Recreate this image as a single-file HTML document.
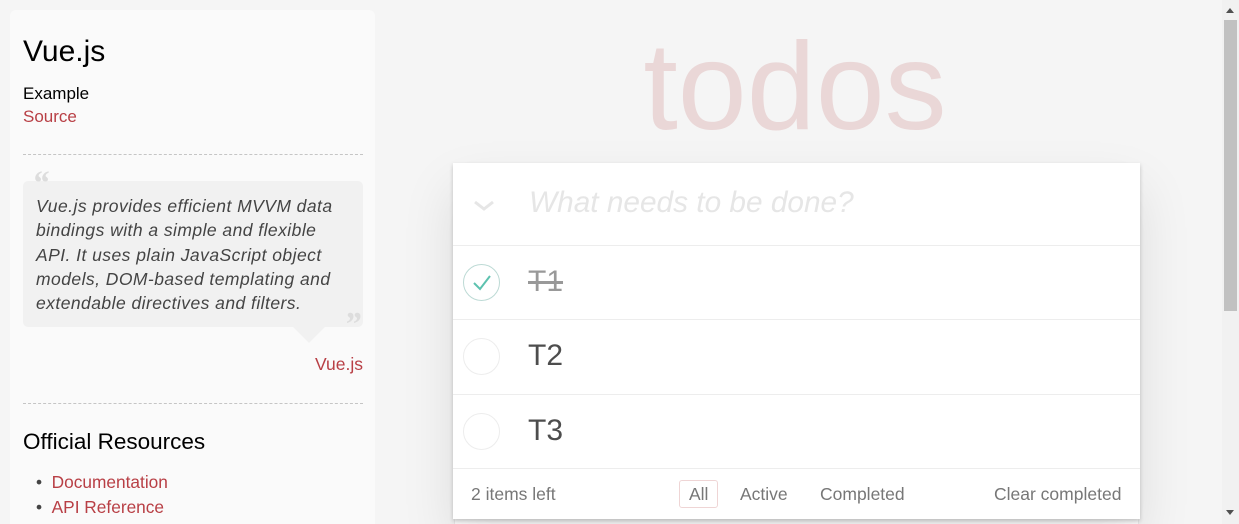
<!DOCTYPE html>
<html style="overflow:hidden"><head><style>
html,body{height:524px}
body{margin:0;width:1239px;height:524px;overflow:hidden;background:#f5f5f5;font-family:"Liberation Sans",Helvetica,Arial,sans-serif;position:relative}
.a{position:absolute}
#side{left:10px;top:10px;width:365px;height:514px;background:#fafafa;border-radius:6px 6px 0 0}
a{color:#b83f45;text-decoration:none}
.hr{position:absolute;left:23px;width:340px;border-top:1px dashed #c5c5c5}
#app{left:453px;top:163px;width:687px;height:356px;background:#fff;box-shadow:0 2px 4px rgba(0,0,0,.2),0 25px 50px rgba(0,0,0,.1)}
.row{position:absolute;left:0;width:687px;border-top:1px solid #ededed;height:74px}
.circ{position:absolute;left:10px;top:18px;width:37px;height:37px;border:1px solid #ededed;border-radius:50%;box-sizing:border-box}
.t{position:absolute;left:75px;top:19px;font-size:30px;color:#4d4d4d}
.f{position:absolute;top:15px;font-size:17.5px;color:#777}
</style></head><body>
<div id="side" class="a"></div>
<div class="a" style="left:23px;top:35px;font-size:30px;color:#000">Vue.js</div>
<div class="a" style="left:23px;top:84px;font-size:17px;color:#000">Example</div>
<div class="a" style="left:23px;top:107px;font-size:17px"><a>Source</a></div>
<div class="hr" style="top:154px"></div>
<div class="a" style="left:23px;top:181px;width:340px;height:146px;background:#f1f1f1;border-radius:5px"></div>
<div class="a" style="left:293px;top:327px;width:0;height:0;border-left:16px solid transparent;border-right:16px solid transparent;border-top:16px solid #f1f1f1"></div>
<div class="a" style="left:32px;top:165px;font-size:34px;color:#ddd;font-style:italic;font-family:'Liberation Serif',serif;font-weight:bold">“</div>
<div class="a" style="left:344px;top:306px;font-size:34px;color:#ddd;font-style:italic;font-family:'Liberation Serif',serif;font-weight:bold">”</div>
<div class="a" style="left:36px;top:194px;width:320px;font-size:17.5px;letter-spacing:0.45px;line-height:24.3px;font-style:italic;color:#444">Vue.js provides efficient MVVM data<br>bindings with a simple and flexible<br>API. It uses plain JavaScript object<br>models, DOM-based templating and<br>extendable directives and filters.</div>
<div class="a" style="left:23px;width:340px;top:354px;text-align:right;font-size:17.5px"><a>Vue.js</a></div>
<div class="hr" style="top:403px"></div>
<div class="a" style="left:23px;top:429px;font-size:22.5px;color:#000">Official Resources</div>
<div class="a" style="left:36px;top:470px;font-size:17.3px;line-height:25px;color:#444">•&nbsp;&nbsp;<a>Documentation</a><br>•&nbsp;&nbsp;<a>API Reference</a></div>

<div class="a" style="left:495px;width:600px;top:16px;text-align:center;font-size:124px;color:rgba(175,47,47,.15);font-weight:100">todos</div>

<div class="a" style="left:455px;top:519px;width:683px;height:5px;background:#fff;box-shadow:0 1px 1px rgba(0,0,0,.2)"></div>
<div id="app" class="a">
 <svg class="a" style="left:20px;top:36px" width="22" height="14"><path d="M2 3 L11 10 L20 3" stroke="#e6e6e6" stroke-width="3" fill="none"/></svg>
 <div class="a" style="left:76px;top:23px;font-size:29.8px;font-style:italic;color:#e6e6e6">What needs to be done?</div>
 <div class="row" style="top:82px"><div class="circ" style="border-color:#bddad5"></div>
  <svg class="a" style="left:18px;top:27px" width="22" height="20"><path d="M3 10 L9 16 L19 3" stroke="#5dc2af" stroke-width="2" fill="none"/></svg>
  <div class="t" style="color:#999;text-decoration:line-through">T1</div></div>
 <div class="row" style="top:156px"><div class="circ"></div><div class="t">T2</div></div>
 <div class="row" style="top:231px"><div class="circ"></div><div class="t">T3</div></div>
 <div class="row" style="top:305px;height:51px">
  <div class="f" style="left:18px">2 items left</div>
  <div class="a" style="left:226px;top:11px;width:39px;height:28px;border:1px solid rgba(175,47,47,.2);border-radius:3px;box-sizing:border-box"></div>
  <div class="f" style="left:236px">All</div>
  <div class="f" style="left:287px">Active</div>
  <div class="f" style="left:367px">Completed</div>
  <div class="f" style="left:541px">Clear completed</div>
 </div>
</div>
<div class="a" style="left:1222px;top:0;width:17px;height:524px;background:#f1f1f1"></div>
<div class="a" style="left:1224px;top:20px;width:13px;height:291px;background:#c1c1c1"></div>
<div class="a" style="left:1226px;top:8px;width:0;height:0;border-left:4px solid transparent;border-right:4px solid transparent;border-bottom:5px solid #505050"></div>
<div class="a" style="left:1226px;top:510px;width:0;height:0;border-left:4px solid transparent;border-right:4px solid transparent;border-top:5px solid #505050"></div>
</body></html>
